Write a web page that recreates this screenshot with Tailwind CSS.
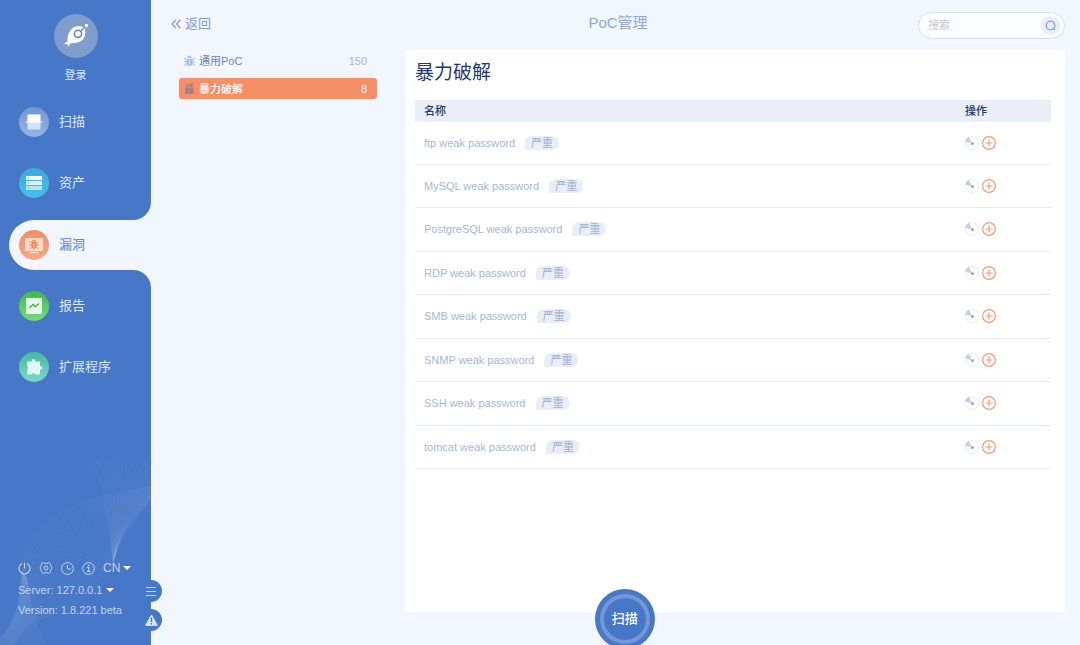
<!DOCTYPE html>
<html lang="zh-CN">
<head>
<meta charset="utf-8">
<meta name="viewport" content="width=device-width, initial-scale=1">
<title>PoC管理</title>
<script src="https://cdn.jsdelivr.net/npm/@tailwindcss/browser@4"></script>
</head>
<body class="flex h-screen overflow-hidden bg-[#f1f6ff] font-['Liberation_Sans','Noto_Sans_CJK_SC',sans-serif] text-[11px] leading-4 text-[#a6b7d6]">

<aside class="relative z-10 flex w-[151px] shrink-0 flex-col text-[#dbe6fa]">
  <div class="flex flex-col rounded-br-[18px] bg-[#4778c7] pt-[14px] pb-3">
    <a href="#login" class="flex flex-col items-center gap-[9px] pb-[14px]">
      <span class="flex size-11 items-center justify-center rounded-full bg-[#7f9dcd]">
        <svg class="size-7" viewBox="0 0 28 28" fill="none">
          <path d="M5.500 19.500C5 13 8 5 15.500 4.200C18 4 20.500 4.500 22.500 5.500C24 9 23.500 15 20.500 18C16.500 21.500 11 20.500 7.500 22L7 25L5.500 22.500L2 21.500Z" fill="#fff"/>
          <circle cx="16" cy="11.800" r="3.600" fill="#fff" stroke="#6889c3" stroke-width="1.600"/>
          <path d="M18.500 9.200L22.500 5.200" stroke="#6889c3" stroke-width="1.300"/>
          <circle cx="24.500" cy="3.500" r="1.700" fill="#fff"/>
        </svg>
      </span>
      <span>登录</span>
    </a>
    <nav class="flex flex-col gap-[11px] text-[13px]">
      <a href="#scan" class="flex h-[50px] items-center gap-[10px] pl-[19px]">
        <span class="flex size-[30px] items-center justify-center rounded-full bg-linear-to-b from-[#7096d2] to-[#94b5e9]">
          <svg class="size-[18px]" viewBox="0 0 18 18"><path d="M2.500 1.500h13V8h-13z" fill="#fff"/><path d="M2.500 10h13v6.500h-13z" fill="#d3e2fc"/><path d="M2.500 8h13v2h-13z" fill="#e7effd"/><path d="M.5 9h17" stroke="#fff"/></svg>
        </span>扫描</a>
      <a href="#assets" class="flex h-[50px] items-center gap-[10px] pl-[19px]">
        <span class="flex size-[30px] items-center justify-center rounded-full bg-linear-to-b from-[#38aadd] to-[#48c0e8]">
          <svg class="size-[18px]" viewBox="0 0 18 18"><path d="M1 2h16v4H1z" fill="#fff"/><path d="M1 7h16v4H1z" fill="#dff4fc"/><path d="M1 12h16v4H1z" fill="#b4e6f7"/><path d="M3 4h1M3 9h1M3 14h1" stroke="#38aadd"/><path d="M5 4h10M5 9h10M5 14h10" stroke="#b9e5f6" stroke-width=".5"/></svg>
        </span>资产</a>
    </nav>
  </div>
  <div class="bg-linear-to-r from-[#4778c7] from-50% to-[#f1f6ff] to-50% pl-[9px]">
    <a href="#vulns" class="flex h-[50px] items-center gap-[10px] rounded-l-full bg-[#f1f6ff] pl-[10px] text-[13px] text-[#5b84cc]">
      <span class="flex size-[30px] items-center justify-center rounded-full bg-linear-to-b from-[#f58c62] to-[#f8a78c]">
        <svg class="size-[18px]" viewBox="0 0 18 18"><path d="M0 2h18v13H0z" fill="#fddcd0"/><path d="M5 16.500h8" stroke="#fddcd0" stroke-width="1.500"/><path d="M6.500 6h5v4.500a2.500 2.500 0 0 1-5 0zM7 5.500a2 2 0 0 1 4 0z" fill="#f38353"/><path d="M4.500 5l2 2M13.500 5l-2 2M4 9h10M4.500 13l2-2M13.500 13l-2-2" stroke="#f38353"/><path d="M9 7v5" stroke="#fddcd0" stroke-width=".7"/></svg>
      </span>漏洞</a>
  </div>
  <div class="relative flex flex-1 flex-col justify-between rounded-tr-[18px] bg-[#4778c7] pt-[11px] pb-[27px]">
    <svg id="waves" class="absolute bottom-0 left-0 h-[185px] w-full" viewBox="0 0 151 185" preserveAspectRatio="none" fill="none" stroke="#fff" stroke-opacity=".07" stroke-width=".7" aria-hidden="true"></svg>
    <nav class="relative flex flex-col gap-[11px] text-[13px]">
      <a href="#reports" class="flex h-[50px] items-center gap-[10px] pl-[19px]">
        <span class="flex size-[30px] items-center justify-center rounded-full bg-linear-to-b from-[#42b849] to-[#6fe078]">
          <svg class="size-[18px]" viewBox="0 0 18 18" fill="none"><path d="M1 1h16v16H1z" fill="#e9f9e9"/><path d="M4.500 11L8 7.500l2.500 2L14 6.500" stroke="#42b849" stroke-width="1.400"/></svg>
        </span>报告</a>
      <a href="#extensions" class="flex h-[50px] items-center gap-[10px] pl-[19px]">
        <span class="flex size-[30px] items-center justify-center rounded-full bg-linear-to-b from-[#46b9a0] to-[#79d9c7]">
          <svg class="size-[18px]" viewBox="0 0 18 18"><path d="M2 3.500h4.800a1.800 1.800 0 1 1 3.400 0H15v4.500a1.800 1.800 0 1 1 0 3.400v5.100h-4.800a1.800 1.800 0 0 0-3.400 0H2v-5.100a1.800 1.800 0 0 0 0-3.400z" fill="#e1f7f2"/></svg>
        </span>扩展程序</a>
    </nav>
    <div class="relative flex flex-col gap-1 pl-[18px] text-[#c3d3ee]">
      <div class="flex items-center gap-2 pb-[2px]">
        <button type="button" aria-label="关闭" class="size-[13px]"><svg viewBox="0 0 13 13" fill="none" stroke="currentColor" stroke-width="1.100"><path d="M6.500.5v6M4 1.600a5.500 5.500 0 1 0 5 0"/></svg></button>
        <button type="button" aria-label="设置" class="size-[14px]"><svg viewBox="0 0 14 14" fill="none" stroke="currentColor"><path d="M4.500 1.500l1.200.8h2.600l1.200-.8 2 1.200v1.500l1.300 2.300v1l-1.300 2.300v1.500l-2 1.200-1.200-.8H5.700l-1.200.8-2-1.200V9.800L1.200 7.500v-1l1.300-2.300V2.700z" stroke-linejoin="round"/><circle cx="7" cy="7" r="2"/></svg></button>
        <button type="button" aria-label="历史" class="size-[13px]"><svg viewBox="0 0 13 13" fill="none" stroke="currentColor"><circle cx="6.500" cy="6.500" r="5.900"/><path d="M6.500 3v4H10"/></svg></button>
        <button type="button" aria-label="关于" class="size-[13px]"><svg viewBox="0 0 13 13" fill="none" stroke="currentColor"><circle cx="6.500" cy="6.500" r="5.900"/><path d="M5 5.500h1.800V9.500M4.800 9.500h3.700" stroke-width="1.200"/><circle cx="6.500" cy="3.500" r=".5" fill="currentColor"/></svg></button>
        <button type="button" class="flex items-center gap-[3px] text-xs">CN<svg class="h-1 w-2" viewBox="0 0 8 4"><path d="M0 0h8L4 4z" fill="#fff"/></svg></button>
      </div>
      <button type="button" class="flex items-center gap-1">Server: 127.0.0.1<svg class="h-1 w-2" viewBox="0 0 8 4"><path d="M0 0h8L4 4z" fill="#fff"/></svg></button>
      <p>Version: 1.8.221 beta</p>
    </div>
  </div>
  <!-- Round tabs hanging over the sidebar's edge -->
  <div class="absolute -right-[11px] bottom-[14px] flex flex-col gap-[7px] text-[#c3d3ee]">
    <button type="button" aria-label="菜单" class="flex size-[22px] items-center justify-center rounded-full bg-[#4778c7]"><svg class="size-[10px]" viewBox="0 0 10 10" stroke="currentColor"><path d="M0 1.500h10M0 5.500h10M0 9.500h10"/></svg></button>
    <button type="button" aria-label="警告" class="flex size-[22px] items-center justify-center rounded-full bg-[#4778c7]"><svg class="h-3 w-[13px]" viewBox="0 0 13 12"><path d="M6.500 1L12.300 11.300H.7z" fill="#dce6f7" stroke="#dce6f7" stroke-linejoin="round"/><path d="M6.500 3.500v4.500M6.500 9v1.500" stroke="#4778c7" stroke-width="1.400"/></svg></button>
  </div>
</aside>

<main class="relative flex min-w-0 flex-1 flex-col pr-[15px] pb-[33px] pl-5">
  <header class="grid h-[50px] shrink-0 grid-cols-[1fr_auto_1fr] items-center">
    <a href="#back" class="flex items-center gap-1 justify-self-start pb-[3px] text-[13px] text-[#7d9fd9]">
      <svg class="size-[10px]" viewBox="0 0 10 10" fill="none" stroke="currentColor" stroke-width="1.200"><path d="M4.800 1L1 5l3.800 4M9.300 1L5.500 5l3.800 4"/></svg>返回</a>
    <h1 class="pb-1 text-[15px] text-[#8fa9d6]">PoC管理</h1>
    <div class="flex h-[27px] w-[147px] items-center justify-between justify-self-end rounded-full border border-[#d5e0ef] bg-[#fcfdff] pr-1 pl-[9px]">
      <input type="search" aria-label="搜索" placeholder="搜索" class="w-[100px] min-w-0 bg-transparent outline-none placeholder:text-[#c3c9d6]">
      <button type="button" aria-label="搜索" class="flex size-[19px] items-center justify-center rounded-full bg-[#e8eef8] text-[#7fa4dc]"><svg class="size-[11px]" viewBox="0 0 11 11" fill="none" stroke="currentColor" stroke-width="1.300"><circle cx="5.500" cy="5.500" r="4.300"/><path d="M8 8l2 2"/></svg></button>
    </div>
  </header>
  <div class="flex min-h-0 flex-1 gap-7 pl-2">
    <nav class="flex w-[198px] shrink-0 flex-col gap-[7px]">
      <a href="#common" class="flex h-[21px] items-center gap-1 rounded-[3px] pr-[10px] pl-[5px] text-[#7186af]">
        <svg class="size-[11px]" viewBox="0 0 11 11" fill="#a3bfeb" stroke="#a3bfeb"><path d="M2.500 3.700h6v4.300a3 3 0 0 1-6 0zM3.300 3a2.200 2.600 0 0 1 4.400 0z" stroke="none"/><path d="M.8 2.500v1.500l2 1M10.200 2.500v1.500l-2 1M0 6.800h11M.8 10.800V9.500l2-1M10.200 10.800V9.500l-2-1" fill="none"/><path d="M5.500 4v6.500" stroke="#dce8fb" stroke-width=".7"/></svg>
        <span class="flex-1">通用PoC</span><span class="text-[#a6b7d6]">150</span></a>
      <a href="#brute" aria-current="page" class="flex h-[21px] items-center gap-1 rounded-[3px] bg-[#f78f66] pr-[10px] pl-[5px] font-medium text-white">
        <svg class="size-[11px]" viewBox="0 0 11 11" fill="none"><path d="M1 4.700h8.500V11H1z" fill="#a57f8b"/><path d="M2.700 5V3.500a2 2 0 0 1 3-1.500M5.500 3.500L8.500.5M6.500 4.500l2.500-3" stroke="#a57f8b" stroke-width="1.300"/><path d="M5.200 7v1.800" stroke="#d98b75"/></svg>
        <span class="flex-1">暴力破解</span><span class="font-normal">8</span></a>
    </nav>
    <section class="min-w-0 flex-1 overflow-hidden bg-white pt-[10px] pr-[14px] pl-[10px]">
      <h2 class="pb-[14px] text-[19px] leading-[26px] text-[#22386e]">暴力破解</h2>
      <table class="h-[369px] w-full border-collapse text-left">
        <thead class="bg-[#e9eef7] text-[#22386e]">
          <tr class="h-[22px]"><th class="p-0 pl-[9px] font-medium">名称</th><th class="w-[86px] p-0 font-medium">操作</th></tr>
        </thead>
        <tbody id="rows"></tbody>
      </table>
    </section>
  </div>
  <button type="button" class="absolute -bottom-1 left-[51%] flex size-[60px] -translate-x-1/2 items-center justify-center rounded-full bg-[#4778c7] text-[13px] font-medium text-white">
    <span class="flex size-[50px] items-center justify-center rounded-full border-4 border-[#7397d6]">扫描</span>
  </button>
</main>

<template id="row">
  <tr class="border-b border-[#e3e9f5]">
    <td class="p-0 pl-[9px]"><span class="flex items-center gap-[10px]"><span class="name"></span><span class="flex h-[14px] items-center rounded-[8px] rounded-bl-[2px] bg-[#e8edf6] px-[6px] text-[#a0b1d1]">严重</span></span></td>
    <td class="p-0"><span class="flex gap-[3px]">
      <button type="button" aria-label="运行" class="size-[14px]"><svg viewBox="0 0 14 14" fill="none"><circle cx="7" cy="7" r="6.500" stroke="#e6ebf4"/><path d="M7 7.500L0 5.500a7 7 0 0 1 4-5z" fill="#c3d0e5"/><circle cx="7.500" cy="7.500" r="1.500" fill="#8fa9d0"/></svg></button>
      <button type="button" aria-label="添加" class="size-[14px]"><svg viewBox="0 0 14 14" fill="none" stroke="#f79a76" stroke-width="1.200"><circle cx="7" cy="7" r="6.400"/><path d="M3.500 7h7M7 3.500v7"/></svg></button>
    </span></td>
  </tr>
</template>

<script>
const names = ['ftp', 'MySQL', 'PostgreSQL', 'RDP', 'SMB', 'SNMP', 'SSH', 'tomcat'];
const tpl = document.getElementById('row');
for (const n of names) {
  const r = tpl.content.cloneNode(true);
  r.querySelector('.name').textContent = n + ' weak password';
  document.getElementById('rows').append(r);
}
// Each ribbon is a family of cubic curves blended between its two edges.
const ribbons = [
  [[-8,185, 45,140, 5,105, 40,68, 65,42, 110,36, 151,26], [14,185, 30,150, 60,160, 88,135, 115,110, 115,80, 151,40]],
  [[92,0, 100,15, 110,60, 113,105], [185,0, 165,25, 128,50, 115,95]],
  [[-6,185, 12,172, 20,145, 22,110], [45,185, 36,165, 29,140, 27,118]]
];
const svg = document.getElementById('waves');
for (const [a, b] of ribbons) for (let i = 0; i <= 24; i++) {
  const p = a.map((v, k) => v + (b[k] - v) * i / 24);
  const path = document.createElementNS('http://www.w3.org/2000/svg', 'path');
  path.setAttribute('d', `M${p.slice(0, 2)}C${p.slice(2)}`);
  svg.append(path);
}
</script>
</body>
</html>
